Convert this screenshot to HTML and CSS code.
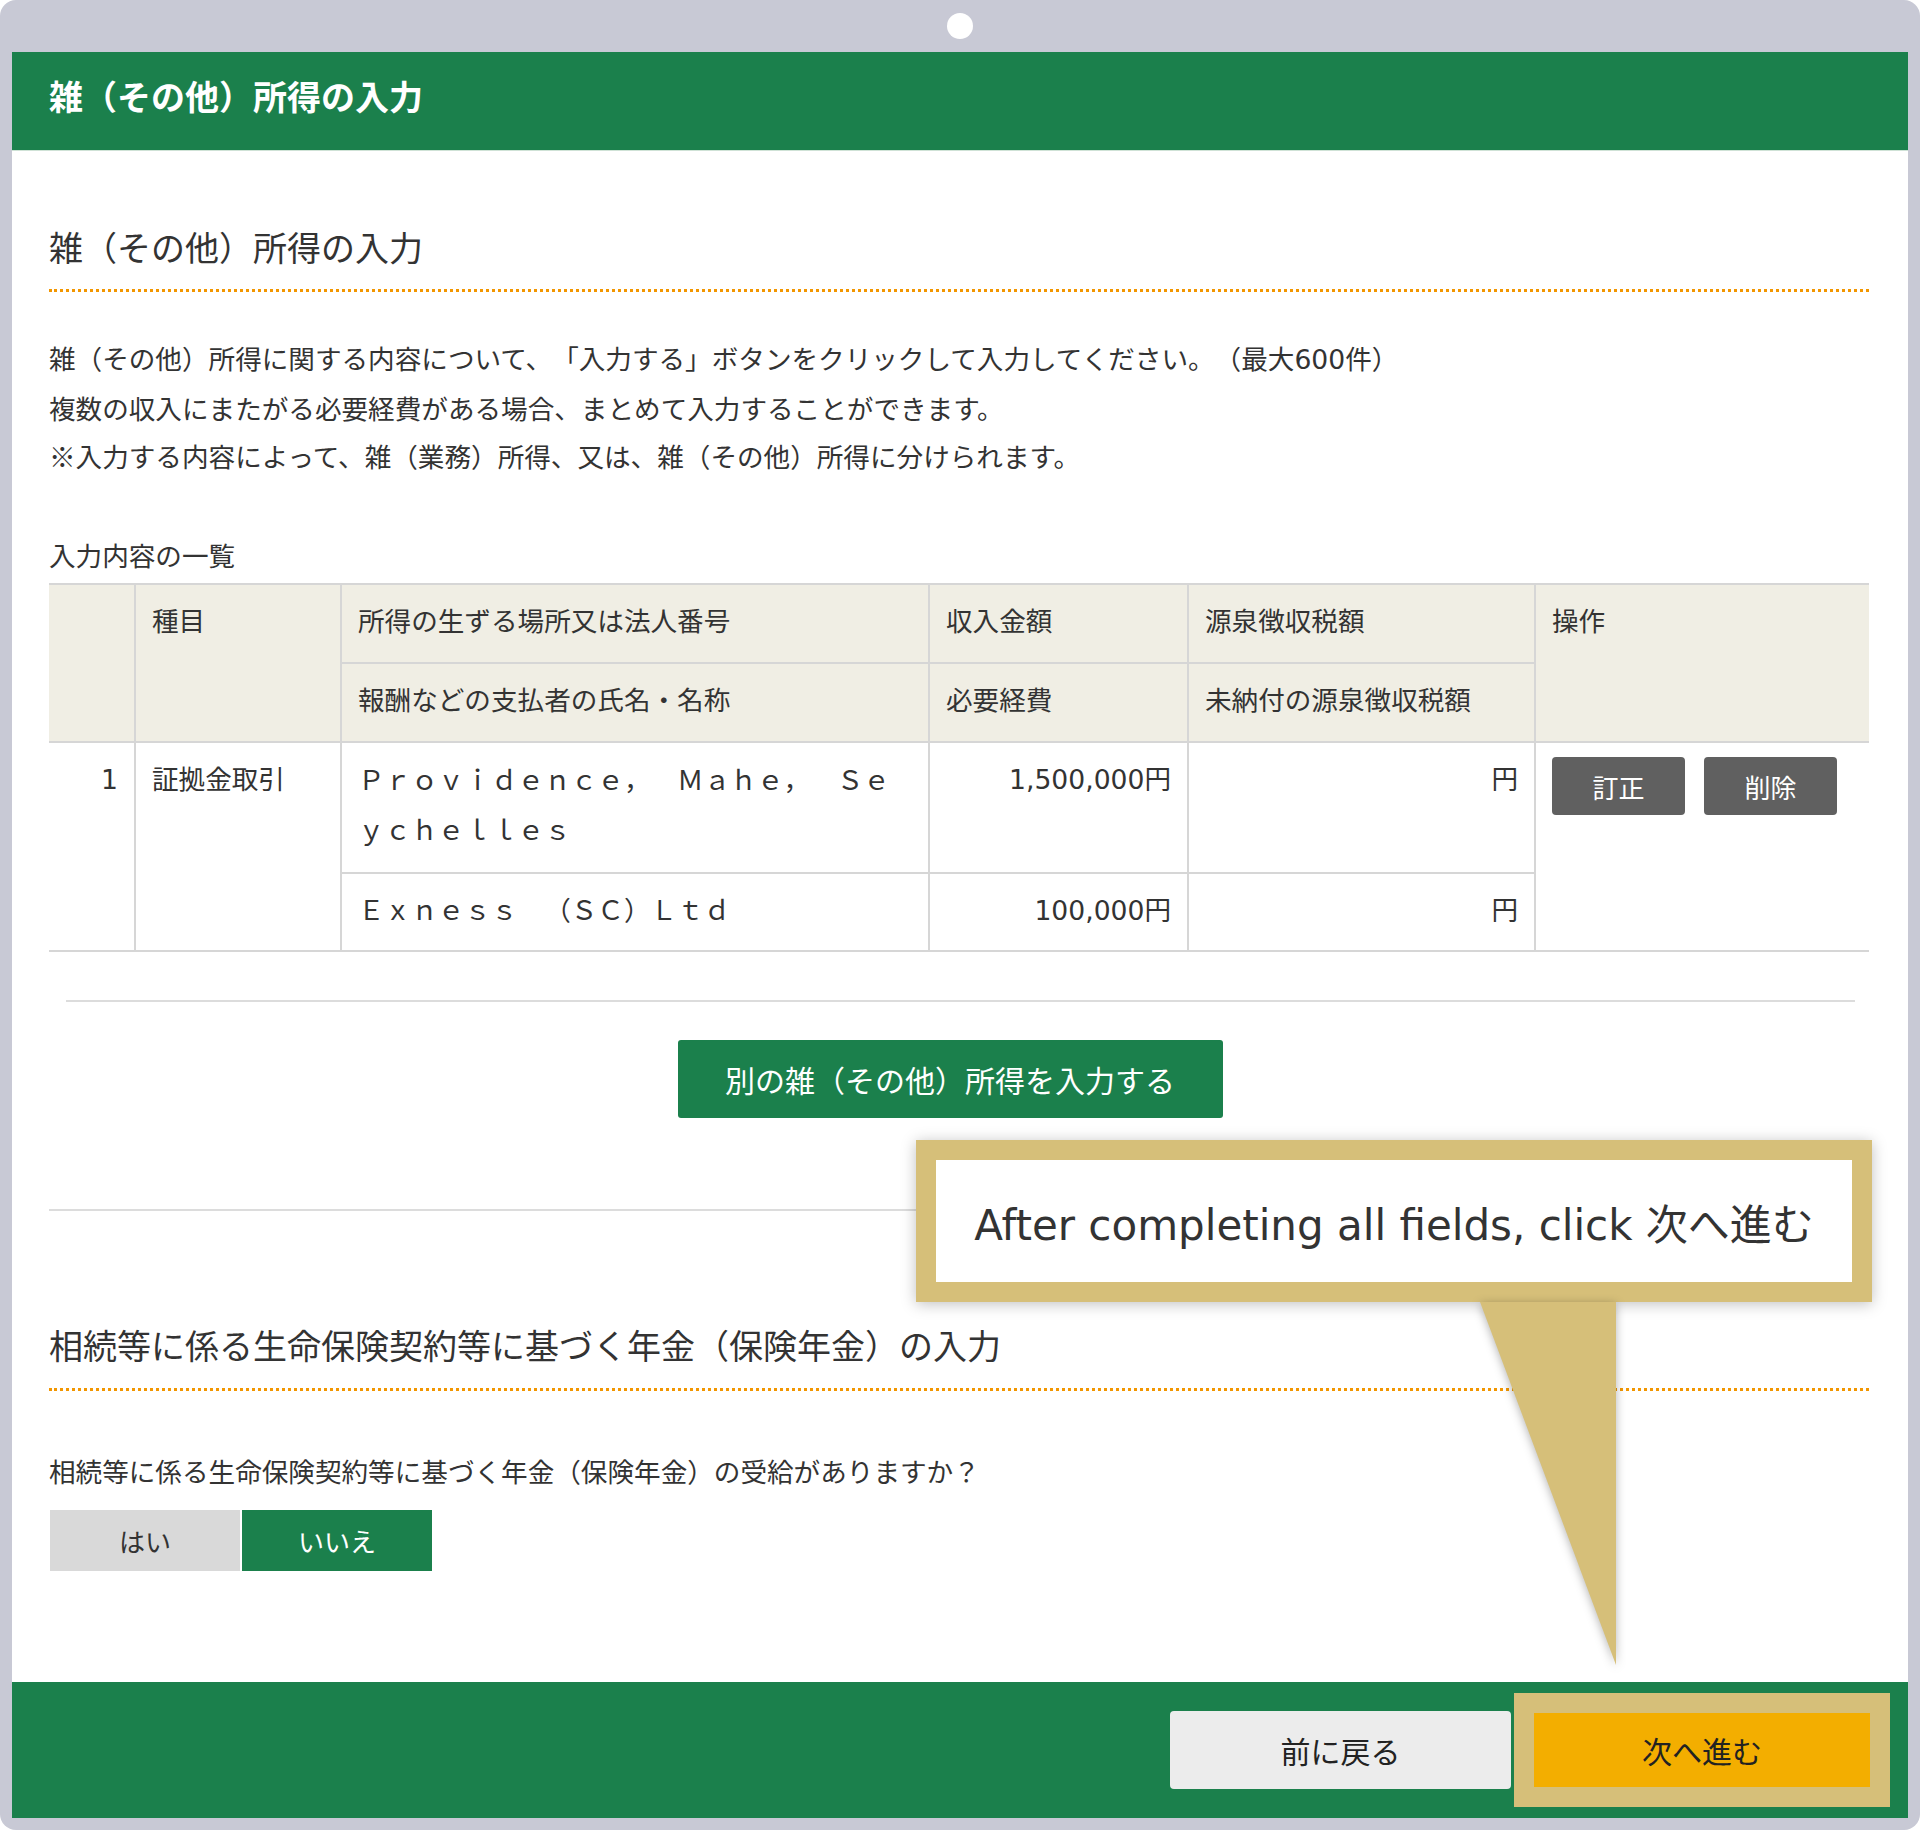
FILE: index.html
```html
<!DOCTYPE html>
<html>
  <head>
    <meta charset="utf-8">
    <title>雑（その他）所得の入力</title>
    <link rel="stylesheet" href="styles.css">
  </head>

  <body>
    <div class="frame">
      <div class="frame-top"><span class="dot"></span></div>

      <div class="panel">
        <div class="page-head">
          <h1>雑（その他）所得の入力</h1>
        </div>

        <div class="content">
          <h2 class="section-title">雑（その他）所得の入力</h2>

          <div class="lead">
            <p>雑（その他）所得に関する内容について、「入力する」ボタンをクリックして入力してください。（最大<span class="digits">600</span>件）</p>
            <p>複数の収入にまたがる必要経費がある場合、まとめて入力することができます。</p>
            <p>※入力する内容によって、雑（業務）所得、又は、雑（その他）所得に分けられます。</p>
          </div>

          <p class="caption">入力内容の一覧</p>
          <table class="list">
            <colgroup>
              <col class="w-no">
              <col class="w-kind">
              <col class="w-place">
              <col class="w-amount">
              <col class="w-tax">
              <col class="w-ops">
            </colgroup>
            <thead>
              <tr>
                <th class="col-no" rowspan="2"></th>
                <th rowspan="2">種目</th>
                <th>所得の生ずる場所又は法人番号</th>
                <th>収入金額</th>
                <th>源泉徴収税額</th>
                <th class="col-ops" rowspan="2">操作</th>
              </tr>
              <tr>
                <th>報酬などの支払者の氏名・名称</th>
                <th>必要経費</th>
                <th>未納付の源泉徴収税額</th>
              </tr>
            </thead>
            <tbody>
              <tr>
                <td class="col-no num" rowspan="2"><span class="digits">1</span></td>
                <td rowspan="2">証拠金取引</td>
                <td class="wide">Ｐｒｏｖｉｄｅｎｃｅ，　Ｍａｈｅ，　Ｓｅｙｃｈｅｌｌｅｓ</td>
                <td class="num"><span class="digits">1,500,000</span>円</td>
                <td class="num">円</td>
                <td class="col-ops" rowspan="2">
                  <div class="ops">
                    <button class="btn-op">訂正</button>
                    <button class="btn-op">削除</button>
                  </div>
                </td>
              </tr>
              <tr class="sub-row">
                <td class="wide">Ｅｘｎｅｓｓ　（ＳＣ）Ｌｔｄ</td>
                <td class="num"><span class="digits">100,000</span>円</td>
                <td class="num">円</td>
              </tr>
            </tbody>
          </table>

          <div class="rule-short"></div>
          <div class="add-row">
            <button class="btn-add">別の雑（その他）所得を入力する</button>
          </div>
          <div class="rule"></div>

          <h2 class="section-title second">相続等に係る生命保険契約等に基づく年金（保険年金）の入力</h2>
          <p class="question">相続等に係る生命保険契約等に基づく年金（保険年金）の受給がありますか？</p>
          <div class="toggle">
            <button class="toggle-btn">はい</button>
            <button class="toggle-btn active">いいえ</button>
          </div>
        </div>

        <div class="page-foot">
          <button class="btn-back">前に戻る</button>
          <button class="btn-next">次へ進む</button>
        </div>
      </div>

      <!-- tutorial overlay -->
      <div class="callout">After completing all fields, click 次へ進む</div>
      <svg class="callout-tail" width="180" height="380" viewBox="0 0 180 380">
        <polygon points="20,12 156,12 156,375" fill="#d6bf79"/>
      </svg>
    </div>
  </body>
</html>
```

FILE: styles.css
```css
body {
  margin: 0;
  background-color: #fff;
  color: #333;
  font-family: "Noto Sans CJK JP", "Noto Sans", sans-serif;
  text-spacing-trim: space-all;
}

button {
  border: none;
  padding: 0;
  font-family: inherit;
  cursor: pointer;
}

.digits {
  font-family: "DejaVu Sans", sans-serif;
}

.frame {
  position: relative;
  width: 1920px;
  height: 1830px;
  box-sizing: border-box;
  padding: 0 12px 12px;
  background-color: #c8c9d5;
  border-radius: 16px;
  display: flex;
  flex-direction: column;
}

.frame-top {
  height: 52px;
  display: flex;
  align-items: center;
  justify-content: center;
}

.dot {
  width: 26px;
  height: 26px;
  border-radius: 50%;
  background-color: #fff;
}

.panel {
  flex: 1;
  background-color: #fff;
  display: flex;
  flex-direction: column;
}

.page-head {
  height: 98px;
  background-color: #1b804c;
  border-bottom: 1px solid #cfe2d6;
  padding-left: 37px;
}

.page-head h1 {
  margin: 0;
  font-size: 34px;
  font-weight: bold;
  line-height: 88px;
  color: #fff;
}

.content {
  flex: 1;
  padding: 0 39px 0 37px;
}

.section-title {
  margin: 71px 0 0;
  font-size: 34px;
  font-weight: normal;
  line-height: 50px;
  padding-bottom: 17px;
  border-bottom: 3px dotted #f29600;
}

.section-title.second {
  margin-top: 109px;
  padding-bottom: 18px;
}

.lead {
  margin-top: 42px;
}

.lead p {
  margin: 0;
  font-size: 26.6px;
  line-height: 48px;
}

.caption {
  margin: 55px 0 8px;
  font-size: 26.6px;
  line-height: 40px;
}

.list {
  width: 1820px;
  table-layout: fixed;
  border-collapse: collapse;
  border-top: 2px solid #d6d6d6;
  border-bottom: 2px solid #d6d6d6;
}

.w-no { width: 86px; }
.w-kind { width: 206px; }
.w-place { width: 588px; }
.w-amount { width: 259px; }
.w-tax { width: 347px; }
.w-ops { width: 334px; }

.list th,
.list td {
  border: 2px solid #d6d6d6;
  padding: 11px 16px 18px;
  font-size: 26.6px;
  font-weight: normal;
  line-height: 48px;
  text-align: left;
  vertical-align: top;
}

.list th {
  background-color: #f0eee4;
}

.list .col-no {
  border-left: none;
}

.list .col-ops {
  border-right: none;
}

.list .num {
  text-align: right;
}

.list td.wide {
  padding-right: 36px;
  line-height: 50px;
  line-break: anywhere;
}

.list .sub-row td {
  line-height: 48px;
  padding-bottom: 15px;
}

.ops {
  display: flex;
  gap: 19px;
  margin-top: 3px;
}

.btn-op {
  width: 133px;
  height: 58px;
  border-radius: 4px;
  background-color: #606060;
  color: #fff;
  font-size: 26px;
}

.rule-short {
  margin: 48px 14px 0 17px;
  border-top: 2px solid #dcdcdc;
}

.add-row {
  display: flex;
  justify-content: center;
  padding-right: 18px;
  margin-top: 38px;
}

.btn-add {
  width: 545px;
  height: 78px;
  border-radius: 3px;
  background-color: #1b804c;
  color: #fff;
  font-size: 30px;
}

.rule {
  margin-top: 91px;
  border-top: 2px solid #dcdcdc;
}

.question {
  margin: 56px 0 0;
  font-size: 26.6px;
  line-height: 48px;
}

.toggle {
  display: flex;
  gap: 2px;
  margin: 15px 0 0 1px;
}

.toggle-btn {
  width: 190px;
  height: 61px;
  background-color: #d9d9d9;
  color: #333;
  font-size: 26px;
}

.toggle-btn.active {
  background-color: #1b804c;
  color: #fff;
}

.page-foot {
  height: 136px;
  background-color: #1b804c;
  display: flex;
  align-items: center;
  justify-content: flex-end;
  gap: 23px;
  padding-right: 38px;
}

.btn-back {
  width: 341px;
  height: 78px;
  border-radius: 4px;
  background-color: #ececec;
  color: #222;
  font-size: 30px;
}

.btn-next {
  width: 336px;
  height: 74px;
  background-color: #f3ae00;
  color: #222;
  font-size: 30px;
  outline: 20px solid #d6bf79;
}

.callout {
  position: absolute;
  left: 916px;
  top: 1140px;
  width: 956px;
  height: 162px;
  box-sizing: border-box;
  border: 20px solid #d6bf79;
  background-color: #fff;
  box-shadow: 0 2px 14px rgba(0, 0, 0, 0.25);
  display: flex;
  align-items: center;
  justify-content: center;
  font-family: "DejaVu Sans", "Noto Sans CJK JP", sans-serif;
  font-size: 42px;
  color: #333;
}

.callout-tail {
  position: absolute;
  left: 1460px;
  top: 1290px;
  overflow: visible;
  filter: drop-shadow(0 2px 5px rgba(0, 0, 0, 0.3));
}
```
